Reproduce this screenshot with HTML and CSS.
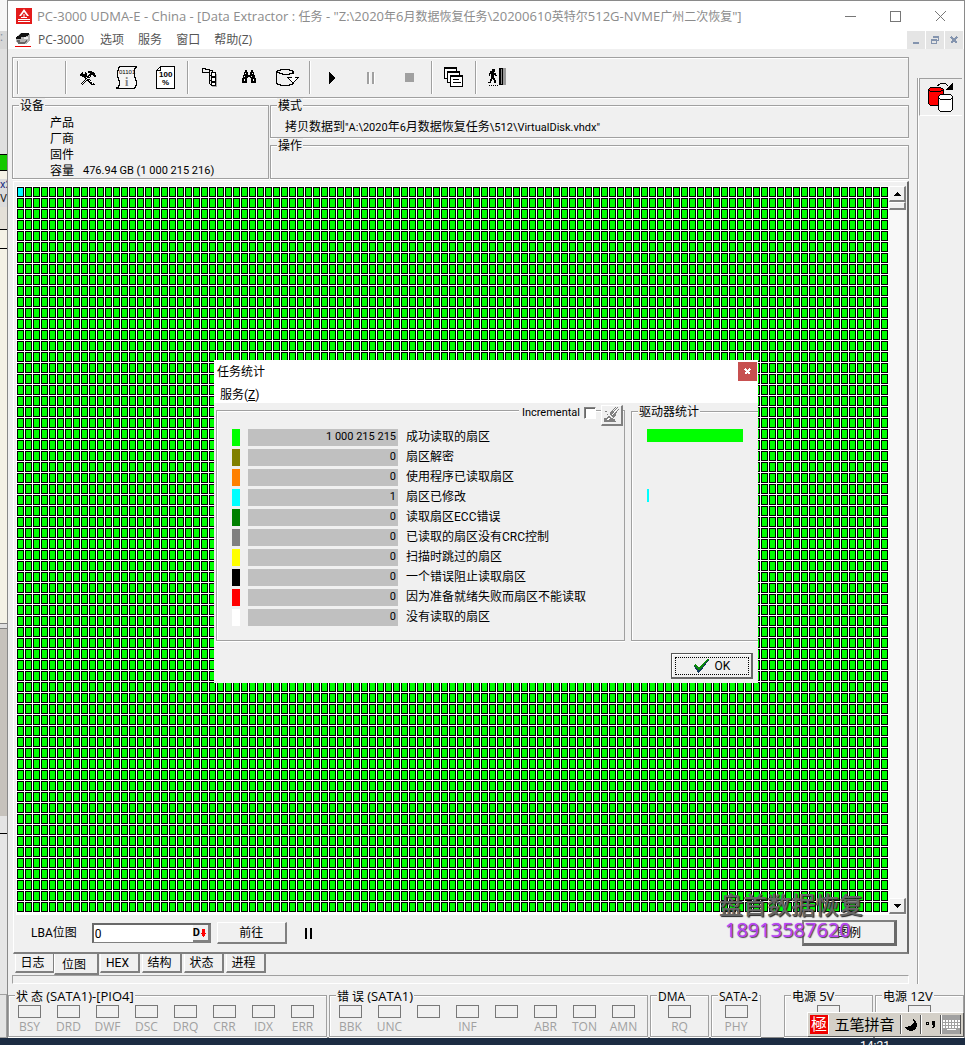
FILE: index.html
```html
<!DOCTYPE html>
<html lang="zh-CN">
<head>
    <meta charset="UTF-8">
    <meta name="viewport" content="width=device-width, initial-scale=1.0">
    <title>PC-3000 UDMA-E</title>
    <link rel="stylesheet" href="styles.css">
</head>
<body>
<div class="screen">
    <div class="desktop">
        <!-- edge of the window lying behind -->
        <div class="behind">
            <div class="b-title"></div>
            <div class="b-menu">:</div>
            <div class="b-tools"></div>
            <div class="b-green"></div>
            <div class="b-cream"></div>
            <div class="b-text">x2</div>
            <div class="b-text b-v">V</div>
            <div class="b-head"></div>
            <div class="b-line"></div>
            <div class="b-line b-rest"></div>
            <div class="b-split"></div>
            <div class="b-gray"></div>
            <div class="b-line b-low"></div>
            <div class="b-foot"></div>
        </div>

        <div class="window">
            <header class="titlebar">
                <svg class="app-icon" width="16" height="16" viewBox="0 0 16 16">
                    <rect width="16" height="16" fill="#e31b1b"/>
                    <path d="M8 1L3 8h2l3-4 3 4h2z" fill="#fff"/>
                    <path d="M8 6v3M5 9.500h6M2 11.500h12M2 13.500h12" stroke="#fff" fill="none"/>
                </svg>
                <h1>PC-3000 UDMA-E - China - [Data Extractor : <span>任务</span> - "Z:\2020<span>年</span>6<span>月数据恢复任务</span>\20200610<span>英特尔</span>512G-NVME<span>广州二次恢复</span>"]</h1>
                <div class="win-controls">
                    <button aria-label="最小化"><svg width="11" height="11"><path d="M0 5.5h11"/></svg></button>
                    <button aria-label="最大化"><svg width="11" height="11"><path d="M.5 .5h10v10h-10z"/></svg></button>
                    <button aria-label="关闭"><svg width="11" height="11"><path d="M.5 .5l10 10M10.5 .5l-10 10"/></svg></button>
                </div>
            </header>

            <nav class="menubar">
                <svg width="16" height="16" viewBox="0 0 16 16">
                    <path d="M1 5 L5 1 H14 L15 3 V8 L11 12 H3 L1 9 Z" fill="#b5b5b5"/>
                    <path d="M3 4 L6 1 H14 V3 L10 5 H6 V7 H1 V5 Z" fill="#111"/>
                    <path d="M2 8h3v2h5l2-3v3l-3 2h-6z" fill="#666"/>
                    <path d="M9 5h4v2h-4z" fill="#eee"/>
                    <rect y="14" width="16" height="1" fill="#e00"/>
                </svg>
                <button>PC-3000</button>
                <button>选项</button>
                <button>服务</button>
                <button>窗口</button>
                <button>帮助(Z)</button>
                <div class="mdi-controls">
                    <button aria-label="最小化子窗口"><svg width="10" height="10"><path d="M2 8h6" stroke-width="2"/></svg></button>
                    <button aria-label="还原子窗口"><svg width="10" height="10"><path d="M3.500 3V1.500h5v4H7M1.500 4.500h5v4h-5zM1 5.500h6M3 2.500h6"/></svg></button>
                    <button aria-label="关闭子窗口"><svg width="10" height="10"><path d="M2 2l6 6M8 2l-6 6" stroke-width="2"/></svg></button>
                </div>
            </nav>

            <div class="workspace">
                <main class="main">
                    <div class="toolbar">
                        <div class="tool-group empty"></div>
                        <div class="tool-group">
                            <button aria-label="工具">
                                <svg width="16" height="16" viewBox="0 0 16 16">
                                    <path d="M8 1h4v1h2v1h1v2h1v2h-2v-1h-1v-1h-2v1h-2v-2h1v-1h-2zM2 2h1v2h2v-2h1v1h1v3h-1v1h-4v-1h-2v-2h1z" fill="#000"/>
                                    <path d="M5.500 6l9 9M4.500 7l8 8M10.500 6l-8.500 9M9.500 5l-8.500 9" stroke="#000" fill="none"/>
                                    <path d="M6.500 7l7 7M9.500 6.500l-7 7" stroke="#fff" fill="none" stroke-dasharray="1 1"/>
                                </svg>
                            </button>
                            <button aria-label="对象信息">
                                <svg width="22" height="23" viewBox="0 0 22 23">
                                    <path d="M3.500 .5h17v1h-1v1h-1v9h1v3h1v5h-1v2h-1v1h-18v-1h2v-2h1v-5h-1v-3h-1v-7h1v-3h1z" fill="#f6f6f6" stroke="#000"/>
                                    <text x="3" y="8" class="pix">01101</text>
                                    <text x="9" y="20" class="pix info-mark">i</text>
                                </svg>
                            </button>
                            <button aria-label="百分比">
                                <svg width="19" height="23" viewBox="0 0 19 23">
                                    <path d="M.5 4.500l4-4h14v22h-18z" fill="#fff" stroke="#000"/>
                                    <path d="M.5 4.500h4v-4" fill="none" stroke="#000"/>
                                    <text x="3" y="11" class="pix dark">100</text>
                                    <text x="6" y="19" class="pix dark">%</text>
                                </svg>
                            </button>
                        </div>
                        <div class="tool-group">
                            <button aria-label="目录树">
                                <svg width="16" height="19" viewBox="0 0 16 19">
                                    <path d="M14 6h1v13h-5v-1h4z" fill="#aaa"/>
                                    <path d="M.5 .5h3v1h4v3h-7zM8 2.500h2.500v2M7.500 5v11M8 7.500h2M8 12.500h2M8 16.500h2" fill="none" stroke="#000"/>
                                    <path d="M9.500 4.500h4v4h-4zM9.500 9.500h4v4h-4zM9.500 14.500h4v3h-4z" fill="#fff" stroke="#000"/>
                                </svg>
                            </button>
                            <button aria-label="查找">
                                <svg width="16" height="15" viewBox="0 0 16 15">
                                    <path d="M4 0h2v2h1v3h2v-3h1v-2h2v2h1v3h1v3h1v5h-5v-5h-1v-1h-2v1h-1v5h-5v-5h1v-3h1v-3h1z" fill="#000"/>
                                    <path d="M4 3h1v1h-1zM3 6h1v1h-1zM3 9h1v2h-1zM11 3h1v1h-1zM10 6h1v1h-1zM12 9h1v2h-1z" fill="#fff"/>
                                </svg>
                            </button>
                            <button aria-label="磁盘">
                                <svg width="23" height="18" viewBox="0 0 23 18">
                                    <path d="M.5 2.500v12h1v1h3v1h9v-1h3v-1h1v-12h-1v-1h-3v-1h-9v1h-3v1z" fill="#f0f0f0" stroke="#000"/>
                                    <path d="M1 3.500h2v1h3v1h7v-1h3v-1h1" fill="none" stroke="#000"/>
                                    <path d="M11.500 8.500h11l-5.500 5.500z" fill="#fff" stroke="#000"/>
                                    <path d="M16 5h3v4h-3z" fill="#fff"/>
                                </svg>
                            </button>
                        </div>
                        <div class="tool-group">
                            <button aria-label="开始"><svg width="6" height="12"><path d="M0 0l6 6-6 6z" fill="#000"/></svg></button>
                            <button aria-label="暂停" disabled><svg width="8" height="12"><path d="M0 0h2v12h-2zM5 0h2v12h-2z" fill="#a0a0a0"/><path d="M2 1h1v11h-1zM7 1h1v11h-1z" fill="#fff"/></svg></button>
                            <button aria-label="停止" disabled><svg width="9" height="9"><path d="M0 0h9v9h-9z" fill="#a0a0a0"/></svg></button>
                        </div>
                        <div class="tool-group">
                            <button aria-label="窗口">
                                <svg width="20" height="21" viewBox="0 0 20 21">
                                    <g fill="#fff" stroke="#000">
                                        <path d="M.5 .5h12v11h-12z"/><path d="M1 1.500h11"/>
                                        <path d="M3.500 4.500h12v11h-12z"/><path d="M4 5.500h11"/>
                                        <path d="M6.500 8.500h12v11h-12z"/><path d="M7 9.500h11M9 12.500h6M9 15.500h8"/>
                                    </g>
                                </svg>
                            </button>
                        </div>
                        <div class="tool-group">
                            <button aria-label="退出">
                                <svg width="19" height="19" viewBox="0 0 19 19">
                                    <path d="M4 1h3v3h-1v1h2v2h1v1h-2v-1h-1v3h1v2h1v3h-2v-3h-1v-1h-1v2h-1v2h-3v-1h2v-3h1v-5h-1v2h-1v-3h1v-2h2z" fill="#000"/>
                                    <path d="M1 17.500h9" stroke="#000" stroke-dasharray="1 1"/>
                                    <path d="M11 0h4v17h-4z" fill="#000"/>
                                    <path d="M13 1h1v15h-1z" fill="#888"/>
                                    <path d="M15 0h3v17h-3z" fill="#999"/>
                                </svg>
                            </button>
                        </div>
                    </div>

                    <div class="info">
                        <fieldset class="group device">
                            <legend>设备</legend>
                            <dl>
                                <dt>产品</dt><dd></dd>
                                <dt>厂商</dt><dd></dd>
                                <dt>固件</dt><dd></dd>
                                <dt>容量</dt><dd>476.94 GB (1 000 215 216)</dd>
                            </dl>
                        </fieldset>
                        <div class="info-right">
                            <fieldset class="group mode">
                                <legend>模式</legend>
                                <p>拷贝数据到<span>"A:\2020</span>年<span>6</span>月数据恢复任务<span>\512\VirtualDisk.vhdx"</span></p>
                            </fieldset>
                            <fieldset class="group">
                                <legend>操作</legend>
                            </fieldset>
                        </div>
                    </div>

                    <section class="panel">
                        <div class="map-row">
                            <div class="sector-map"><div class="sector modified"></div></div>
                            <div class="scrollbar">
                                <button aria-label="向上"><svg width="8" height="4"><path d="M0 4l4-4 4 4z"/></svg></button>
                                <div class="thumb"></div>
                                <button class="down" aria-label="向下"><svg width="8" height="4"><path d="M0 0l4 4 4-4z"/></svg></button>
                            </div>
                        </div>
                        <div class="lba-row">
                            <label for="lba">LBA位图</label>
                            <div class="lba-box">
                                <input id="lba" type="text" value="0">
                                <button aria-label="十进制"><b>D</b><svg width="5" height="8"><path d="M1 0h3v4h1l-2 4h-1l-2-4h1z" fill="#f00"/></svg></button>
                            </div>
                            <button class="push go">前往</button>
                            <svg width="8" height="11"><path d="M0 0h2v11h-2zM5 0h2v11h-2z" fill="#000"/></svg>
                            <button class="push legend-btn">图例</button>
                        </div>
                    </section>

                    <div class="tabs" role="tablist">
                        <button role="tab">日志</button>
                        <button role="tab" class="active" aria-selected="true">位图</button>
                        <button role="tab">HEX</button>
                        <button role="tab">结构</button>
                        <button role="tab">状态</button>
                        <button role="tab">进程</button>
                    </div>
                    <div class="strip"></div>
                </main>

                <aside class="side">
                    <button aria-label="复制任务">
                        <svg width="26" height="32" viewBox="0 0 26 32">
                            <path d="M.5 8.500v14l2 2h10l3-2v-14l-3-2h-10z" fill="#f00" stroke="#000"/>
                            <path d="M.5 8.500l2 2h10l3-2" fill="none" stroke="#000"/>
                            <path d="M10.500 15.500v13l2 2h10l2-2v-13l-2-2h-10z" fill="#fff" stroke="#000"/>
                            <path d="M10.500 16.500l2 2h10l2-2" fill="none" stroke="#000"/>
                            <path d="M9.500 5l3-2.500h5l3 3" fill="none" stroke="#000"/>
                            <path d="M25 1v8h-8z" fill="#000"/>
                        </svg>
                    </button>
                </aside>
            </div>

            <footer class="status">
                <fieldset class="group leds">
                    <legend>状 态 <span>(SATA1)-[PIO4]</span></legend>
                    <ul>
                        <li>BSY</li><li>DRD</li><li>DWF</li><li>DSC</li><li>DRQ</li><li>CRR</li><li>IDX</li><li>ERR</li>
                    </ul>
                </fieldset>
                <fieldset class="group leds">
                    <legend>错 误 <span>(SATA1)</span></legend>
                    <ul>
                        <li>BBK</li><li>UNC</li><li></li><li>INF</li><li></li><li>ABR</li><li>TON</li><li>AMN</li>
                    </ul>
                </fieldset>
                <fieldset class="group leds single dma">
                    <legend>DMA</legend>
                    <ul><li>RQ</li></ul>
                </fieldset>
                <fieldset class="group leds single sata">
                    <legend>SATA-2</legend>
                    <ul><li>PHY</li></ul>
                </fieldset>
                <fieldset class="group leds single power first">
                    <legend>电源 <span>5V</span></legend>
                    <ul><li></li></ul>
                </fieldset>
                <fieldset class="group leds single power">
                    <legend>电源 <span>12V</span></legend>
                    <ul><li></li></ul>
                </fieldset>
            </footer>

            <section class="dialog" role="dialog" aria-labelledby="dlg-title">
                <header>
                    <h2 id="dlg-title">任务统计</h2>
                    <button class="close" aria-label="关闭"><svg width="7" height="7"><path d="M1 1l5 5M6 1l-5 5" stroke="#fff" stroke-width="2"/></svg></button>
                </header>
                <nav><button>服务(<u>Z</u>)</button></nav>
                <div class="dialog-body">
                    <div class="box counters">
                        <div class="incremental">
                            <label for="inc">Incremental</label>
                            <input id="inc" type="checkbox">
                            <button aria-label="清除">
                                <svg width="18" height="18" viewBox="0 0 18 18">
                                    <path d="M16 1l-7 7M17 3l-6 7M14 1l-6 6" stroke="#808080" fill="none"/>
                                    <path d="M10 5l4 4-3 3-4-4zM2 12h3l2-3 2 3 4 1 1 3h-12z" fill="#808080"/>
                                    <path d="M3 5h2v1h-2zM5 8h1v1h-1zM10 13h2v1h-2zM4 14h2v1h-2z" fill="#808080"/>
                                    <path d="M15 4l-5 5M5 14l3-2" stroke="#fff"/>
                                </svg>
                            </button>
                        </div>
                        <table>
                            <tr><td class="c-ok"></td><td>1 000 215 215</td><th>成功读取的扇区</th></tr>
                            <tr><td class="c-decoded"></td><td>0</td><th>扇区解密</th></tr>
                            <tr><td class="c-program"></td><td>0</td><th>使用程序已读取扇区</th></tr>
                            <tr><td class="c-modified"></td><td>1</td><th>扇区已修改</th></tr>
                            <tr><td class="c-ecc"></td><td>0</td><th>读取扇区ECC错误</th></tr>
                            <tr><td class="c-crc"></td><td>0</td><th>已读取的扇区没有CRC控制</th></tr>
                            <tr><td class="c-skipped"></td><td>0</td><th>扫描时跳过的扇区</th></tr>
                            <tr><td class="c-blocked"></td><td>0</td><th>一个错误阻止读取扇区</th></tr>
                            <tr><td class="c-notready"></td><td>0</td><th>因为准备就绪失败而扇区不能读取</th></tr>
                            <tr><td class="c-unread"></td><td>0</td><th>没有读取的扇区</th></tr>
                        </table>
                    </div>
                    <fieldset class="group drive">
                        <legend>驱动器统计</legend>
                        <div class="bar-slot"><div class="bar c-ok" style="width: 100%"></div></div>
                        <div class="bar-slot"></div>
                        <div class="bar-slot"></div>
                        <div class="bar-slot"><div class="bar c-modified" style="width: 2%"></div></div>
                    </fieldset>
                </div>
                <div class="dialog-foot">
                    <button class="ok">
                        <svg width="17" height="15" viewBox="0 0 17 15"><path d="M1 8l3-1 2 3 8-9 2 1-9 12-2 1z" fill="#123a5a"/><path d="M1 7l2-1 3 4 8-9 2 0-10 12z" fill="#0a8a0a"/></svg>
                        OK
                    </button>
                </div>
            </section>

            <div class="watermark">
                <strong>盘首数据恢复</strong>
                <span>18913587620</span>
            </div>

            <div class="ime">
                <span class="ime-logo">極</span>
                <button class="ime-name">五笔拼音</button>
                <button aria-label="半角"><svg width="13" height="12"><path d="M8 0q3 7-8 8q2 4 6 4q6-1 6-6q0-4-4-6z" fill="#000"/></svg></button>
                <button aria-label="标点"><svg width="12" height="8"><path d="M1.500 1.500h2v2h-2z" fill="none" stroke="#000"/><path d="M7 0h3v5l-2 2h-1v-1l1-1v-1h-1z" fill="#000"/></svg></button>
                <button class="dark" aria-label="软键盘"><svg width="17" height="11"><path d="M0 1.500h17M0 4.500h17M0 7.500h17" stroke="#fff" stroke-width="2" stroke-dasharray="2 1"/><path d="M4 10h9" stroke="#fff"/></svg></button>
            </div>
        </div>
    </div>
    <div class="taskbar">14:21</div>
</div>
</body>
</html>
```

FILE: styles.css
```css
* {
    box-sizing: border-box;
}

body {
    margin: 0;
    background-color: #f0f0f0;
    font-family: Roboto, "Noto Sans CJK SC", sans-serif;
    font-size: 12px;
    line-height: 16px;
    color: #000;
}

h1, h2, p, dl, dd, ul {
    margin: 0;
    padding: 0;
    font-size: 12px;
    font-weight: normal;
}

button, input {
    margin: 0;
    padding: 0;
    border: 0;
    border-radius: 0;
    background: none;
    font: inherit;
    color: inherit;
}

svg {
    display: block;
    flex: none;
    shape-rendering: crispEdges;
}

.screen {
    display: flex;
    flex-direction: column;
    min-height: 100vh;
}

.desktop {
    display: flex;
    flex: 1;
}

/* window behind */
.behind {
    display: flex;
    flex-direction: column;
    width: 7px;
    overflow: hidden;
    background-color: #e4e4e4;
    line-height: 12px;
}

.b-title { height: 31px; background-color: #f6f6f6; }
.b-menu { height: 18px; background-color: #d6d6d6; color: #7a8aa0; }
.b-tools { height: 105px; background-color: #e0e0e0; }
.b-green { height: 17px; background-color: #14c800; border-top: 1px solid #000; border-bottom: 1px solid #000; }
.b-cream { height: 8px; background-color: #f4f2e6; }
.b-text { height: 14px; background-color: #dcdcdc; color: #1a2a80; font-size: 11px; }
.b-v { color: #222; }
.b-head { height: 22px; background-color: #e4e0d8; }
.b-line { height: 19px; background-color: #f4f2e6; border-top: 1px solid #000; }
.b-rest { height: 375px; }
.b-split { height: 6px; background-color: #e0e0e0; border-top: 1px solid #808080; border-bottom: 1px solid #808080; }
.b-gray { height: 187px; background-color: #c6c2bc; }
.b-low { height: 161px; margin-top: 17px; background-color: #e6e6e6; }
.b-foot { flex: 1; border-top: 1px solid #a0a0a0; border-right: 1px solid #a0a0a0; border-bottom: 1px solid #a0a0a0; }

/* main window */
.window {
    position: relative;
    display: flex;
    flex-direction: column;
    flex: 1;
    min-width: 0;
    border: 1px solid #8a8a8a;
    background-color: #f0f0f0;
}

.titlebar {
    display: flex;
    align-items: center;
    height: 30px;
    padding: 0 1px 0 8px;
    background-color: #fff;
    color: #8c8c8c;
}

.titlebar h1 {
    flex: 1;
    padding-left: 5px;
    font-family: "Open Sans", "Noto Sans CJK SC", sans-serif;
    font-size: 13px;
    line-height: 16px;
    white-space: nowrap;
}

.titlebar h1 span {
    font-size: 12px;
}

.app-icon {
    shape-rendering: auto;
}

.win-controls {
    display: flex;
}

.win-controls button {
    display: flex;
    align-items: center;
    justify-content: center;
    width: 45px;
    height: 28px;
}

.win-controls path {
    fill: none;
    stroke: #777;
}

.menubar {
    display: flex;
    align-items: center;
    gap: 14px;
    height: 18px;
    padding: 0 0 0 7px;
    background-color: #fff;
    color: #555;
    font-family: "Open Sans", "Noto Sans CJK SC", sans-serif;
    line-height: 18px;
}

.menubar svg + button {
    margin: 0 2px 0 -7px;
}

.mdi-controls {
    display: flex;
    gap: 1px;
    margin-left: auto;
    padding-right: 1px;
}

.mdi-controls button {
    display: flex;
    align-items: center;
    justify-content: center;
    width: 18px;
    height: 18px;
    background-color: #e5e5e5;
}

.mdi-controls path {
    fill: none;
    stroke: #8494ae;
}

.workspace {
    display: flex;
    flex: 1;
    gap: 8px;
    padding: 8px 2px 0 4px;
}

.main {
    display: flex;
    flex-direction: column;
    flex: 1;
    min-width: 0;
}

.toolbar {
    display: flex;
    height: 41px;
    padding: 3px 4px;
    border: 1px solid #a0a0a0;
    box-shadow: inset 1px 1px #fff, 0 1px #fff;
}

.tool-group {
    display: flex;
    padding: 0 2px;
    border-left: 1px solid #a0a0a0;
    box-shadow: inset 1px 0 #fff;
}

.tool-group.empty {
    width: 48px;
}

.tool-group button {
    display: flex;
    align-items: center;
    justify-content: center;
    width: 39px;
}

.pix {
    font: 6px "Liberation Sans", sans-serif;
    fill: #000;
}

.pix.info-mark {
    font: bold 12px "Liberation Serif", serif;
    fill: #808080;
}

.pix.dark {
    font: bold 8px "Liberation Sans", sans-serif;
}

/* group boxes */
.group {
    min-width: 0;
    margin: 0;
    padding: 0;
    border: 1px solid #a0a0a0;
    box-shadow: inset 1px 1px #fff, 0 1px #fff;
}

.group legend {
    margin-left: 6px;
    padding: 3px 1px 0;
    background-color: #f0f0f0;
    line-height: 11px;
}

.info {
    display: flex;
    gap: 1px;
    height: 81px;
}

.device {
    width: 257px;
}

.device dl {
    display: grid;
    grid-template-columns: 33px 1fr;
    grid-auto-rows: 16px;
    padding: 3px 0 0 37px;
}

.device dd,
.mode span {
    font-size: 11px;
}

.info-right {
    display: grid;
    grid-template-rows: 40px 41px;
    flex: 1;
    min-width: 0;
}

.mode p {
    padding: 7px 0 0 14px;
    white-space: nowrap;
}

/* sector map */
.panel {
    display: flex;
    flex-direction: column;
    flex: 1;
    margin: 2px 0 0 1px;
    padding: 4px 1px 0 2px;
    border: 1px solid #fff;
    border-right: 2px solid #696969;
    border-bottom: 2px solid #808080;
}

.map-row {
    display: flex;
    flex: 1;
    background-color: #fff;
}

.sector-map {
    flex: 1;
    margin: 1px 0 3px 1px;
    background-color: #0f0;
    background-image:
        linear-gradient(to right, transparent 7px, #fff 7px),
        linear-gradient(to bottom, transparent 10px, #fff 10px),
        linear-gradient(to right, #000 1px, transparent 1px, transparent 6px, #000 6px),
        linear-gradient(to bottom, #000 1px, transparent 1px, transparent 9px, #000 9px);
    background-size: 8px 11px;
}

.sector {
    width: 7px;
    height: 10px;
    border: 1px solid #000;
}

.modified {
    background-color: #0ff;
}

.scrollbar {
    display: flex;
    flex-direction: column;
    width: 17px;
    background-color: #f8f8f8;
}

.scrollbar button,
.thumb {
    display: flex;
    align-items: center;
    justify-content: center;
    height: 16px;
    border: 1px solid #fff;
    border-right: 2px solid #808080;
    border-bottom: 2px solid #808080;
    background-color: #f0f0f0;
}

.thumb {
    height: 8px;
}

.scrollbar .down {
    margin: auto 0 1px;
}

.lba-row {
    display: flex;
    align-items: center;
    height: 37px;
    padding: 0 9px 1px 15px;
}

.lba-box {
    display: flex;
    width: 119px;
    height: 20px;
    margin: 0 6px 0 15px;
    border: 1px solid #808080;
    border-top: 2px solid #696969;
    border-left: 2px solid #696969;
    background-color: #fff;
}

.lba-box input {
    flex: 1;
    min-width: 0;
    padding-left: 1px;
}

.lba-box button {
    display: flex;
    align-items: center;
    gap: 1px;
    width: 17px;
    border-right: 2px solid #808080;
    border-bottom: 2px solid #808080;
    background-color: #f0f0f0;
    font-size: 11px;
}

.push {
    height: 22px;
    border: 1px solid #fff;
    border-right: 2px solid #808080;
    border-bottom: 2px solid #808080;
    background-color: #f0f0f0;
}

.go {
    width: 70px;
    margin-right: 18px;
}

.legend-btn {
    width: 95px;
    height: 26px;
    margin-left: auto;
    border: 2px solid #808080;
    border-right: 3px solid #696969;
    border-bottom: 3px solid #696969;
}

.tabs {
    display: flex;
    gap: 2px;
    height: 21px;
    padding-left: 3px;
}

.tabs button {
    width: 40px;
    height: 19px;
    padding-right: 4px;
    border-left: 1px solid #fff;
    border-right: 2px solid #808080;
    border-bottom: 2px solid #808080;
    background-color: #f0f0f0;
}

.tabs .active {
    width: 45px;
    height: 21px;
    margin: 0 -1px 0 -3px;
    padding-top: 3px;
}

.strip {
    height: 9px;
    border: 1px solid #a0a0a0;
    border-right-color: #fff;
    border-bottom-color: #fff;
}

.side {
    width: 45px;
    margin-top: 21px;
    padding-left: 1px;
    border-left: 1px solid #a0a0a0;
    box-shadow: inset 1px 0 #fff;
}

.side button {
    display: flex;
    align-items: center;
    justify-content: center;
    width: 43px;
    height: 38px;
    border-top: 1px solid #a0a0a0;
    border-left: 1px solid #a0a0a0;
    border-bottom: 1px solid #fff;
}

/* status lights */
.status {
    display: flex;
    gap: 2px;
    padding-top: 4px;
    font-family: "Open Sans", "Noto Sans CJK SC", sans-serif;
}

.status legend span {
    font-size: 13px;
}

.leds {
    flex: 0 1 319px;
    height: 49px;
}

.leds ul {
    display: flex;
    padding: 3px 0 0 1px;
    list-style: none;
}

.single ul {
    justify-content: center;
    padding-left: 0;
}

.leds li {
    width: 39px;
    color: #a0a0a0;
    text-align: center;
}

.leds li::before {
    content: "";
    display: block;
    width: 21px;
    height: 11px;
    margin: 0 auto 1px;
    border: 1px solid #787878;
}

.dma {
    flex-basis: 59px;
}

.sata {
    flex-basis: 50px;
}

.power {
    flex: 0 1 89px;
}

.power.first {
    margin-left: auto;
}

/* statistics dialog */
.dialog {
    position: absolute;
    top: 359px;
    left: 206px;
    width: 544px;
    height: 323px;
    background-color: #f0f0f0;
}

.dialog header {
    display: flex;
    justify-content: space-between;
    height: 24px;
    padding: 2px 1px 0 3px;
    background-color: #fff;
    line-height: 20px;
}

.close {
    display: flex;
    align-items: center;
    justify-content: center;
    width: 19px;
    height: 19px;
    background-color: #c75050;
}

.dialog nav {
    height: 19px;
    padding-left: 6px;
    background-color: #fff;
    line-height: 22px;
}

.dialog-body {
    display: flex;
    gap: 6px;
    height: 238px;
    padding: 1px 0 0 2px;
}

.box {
    position: relative;
    width: 409px;
    margin-top: 6px;
    padding: 15px 0 0 7px;
    border: 1px solid #a0a0a0;
    box-shadow: inset 1px 1px #fff, 0 1px #fff;
}

.incremental {
    position: absolute;
    top: -6px;
    right: 1px;
    display: flex;
    align-items: flex-start;
}

.incremental label {
    padding: 0 4px 0 3px;
    background-color: #f0f0f0;
    font-size: 11px;
}

.incremental input {
    appearance: none;
    width: 12px;
    height: 12px;
    margin: 2px 5px 0 0;
    border: 1px solid #fff;
    border-top-color: #808080;
    border-left-color: #808080;
    background-color: #fff;
    box-shadow: inset 1px 1px #696969;
}

.incremental button {
    width: 22px;
    height: 21px;
    border: 1px solid #fff;
    border-right: 2px solid #808080;
    border-bottom: 2px solid #808080;
    background-color: #f0f0f0;
}

table {
    border-spacing: 8px 3px;
    line-height: 16px;
}

tr {
    height: 17px;
}

td, th {
    padding: 0;
    font-weight: normal;
    text-align: left;
    vertical-align: top;
}

td:first-child {
    width: 8px;
}

td:nth-child(2) {
    width: 150px;
    padding-right: 2px;
    background-color: #c0c0c0;
    font-size: 11px;
    text-align: right;
}

.c-ok { background-color: #0f0; }
.c-decoded { background-color: #808000; }
.c-program { background-color: #ff8000; }
.c-modified { background-color: #0ff; }
.c-ecc { background-color: #008000; }
.c-crc { background-color: #808080; }
.c-skipped { background-color: #ff0; }
.c-blocked { background-color: #000; }
.c-notready { background-color: #f00; }
.c-unread { background-color: #fff; }

.drive {
    flex: 1;
    border-right: 0;
}

.drive .bar-slot {
    height: 20px;
    margin: 0 15px;
}

.drive legend {
    margin-bottom: 11px;
}

.bar {
    height: 13px;
}

.dialog-foot {
    display: flex;
    justify-content: flex-end;
    padding: 12px 5px 0;
}

.ok {
    display: flex;
    align-items: center;
    justify-content: center;
    gap: 5px;
    width: 82px;
    height: 26px;
    border: 1px solid #555;
    border-right: 2px solid #696969;
    border-bottom: 2px solid #696969;
    outline: 1px dotted #000;
    outline-offset: -5px;
    box-shadow: inset 1px 1px #fff;
}

/* overlay text */
.watermark {
    position: absolute;
    right: 101px;
    bottom: 97px;
    display: flex;
    flex-direction: column;
}

.watermark strong {
    font-size: 24px;
    font-weight: 500;
    line-height: 28px;
    color: #666;
    text-shadow: 1px 1px 1px #222;
}

.watermark span {
    padding-left: 6px;
    font-family: "Open Sans", sans-serif;
    font-size: 20px;
    line-height: 20px;
    color: #bb44f4;
    text-shadow: 1px 1px 1px #444, 0 0 1px #bb44f4;
}

/* input method bar */
.ime {
    position: absolute;
    right: 0;
    bottom: 0;
    display: flex;
    align-items: stretch;
    width: 157px;
    height: 25px;
    padding: 2px;
    border: 1px solid #fff;
    border-right-color: #555;
    border-bottom-color: #555;
    background-color: #d4d0c8;
}

.ime-logo {
    width: 18px;
    background-color: #e00;
    color: #fff;
    font-size: 16px;
    line-height: 19px;
    text-align: center;
}

.ime button {
    display: flex;
    align-items: center;
    justify-content: center;
    flex: 1;
    border-right: 1px solid #555;
    border-left: 1px solid #fff;
}

.ime .ime-name {
    flex: none;
    width: 73px;
    font-size: 15px;
}

.ime .dark {
    background-color: #a0a0a0;
}

.taskbar {
    height: 7px;
    padding-right: 75px;
    overflow: hidden;
    background-color: #1c2c42;
    color: #fff;
    text-align: right;
}
```
